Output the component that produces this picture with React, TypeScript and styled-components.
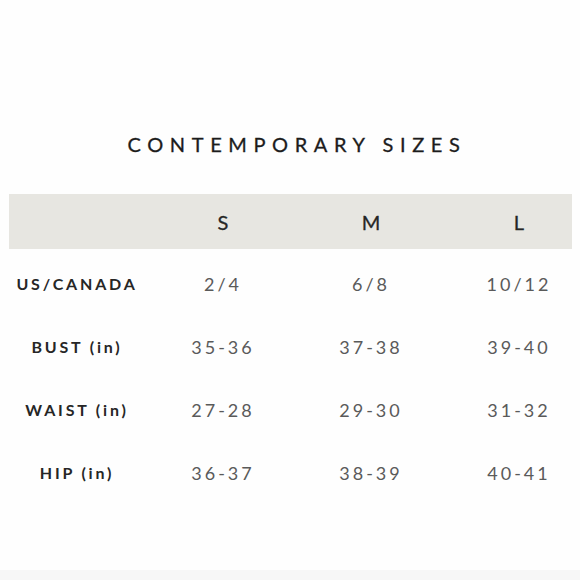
import React from 'react';
import styled, { createGlobalStyle } from 'styled-components';

const SIZES = ['S', 'M', 'L'];

const ROWS = [
  { label: 'US/CANADA', values: ['2/4', '6/8', '10/12'] },
  { label: 'BUST (in)', values: ['35-36', '37-38', '39-40'] },
  { label: 'WAIST (in)', values: ['27-28', '29-30', '31-32'] },
  { label: 'HIP (in)', values: ['36-37', '38-39', '40-41'] },
];

const GlobalStyle = createGlobalStyle`
  html, body {
    margin: 0;
    padding: 0;
    background: #fefefe;
    overflow: hidden;
  }
  body {
    font-family: Lato, "Open Sans", sans-serif;
  }
`;

export default function App() {
  return (
    <>
      <GlobalStyle />
      <Page>
        <Title>CONTEMPORARY SIZES</Title>
        <Table>
          <HeaderBand>
            <Cell />
            {SIZES.map((s) => (
              <SizeHead key={s}>{s}</SizeHead>
            ))}
          </HeaderBand>
          {ROWS.map((row) => (
            <Row key={row.label}>
              <Label>{row.label}</Label>
              {row.values.map((v, i) => (
                <Value key={i}>{v}</Value>
              ))}
            </Row>
          ))}
        </Table>
        <Footer />
      </Page>
    </>
  );
}

const Page = styled.div`
  display: flex;
  flex-direction: column;
  height: 580px;
  padding-top: 132px;
  box-sizing: border-box;
`;

const Title = styled.h1`
  margin: 0;
  padding-left: 14px;
  text-align: center;
  font-size: 20px;
  line-height: 24px;
  font-weight: 400;
  letter-spacing: 6.6px;
  color: #1c1c1c;
  -webkit-text-stroke: 0.3px #1c1c1c;
`;

const Table = styled.div`
  display: flex;
  flex-direction: column;
  margin: 38px 0 0 9px;
  width: 563px;
`;

const gridCols = `
  display: grid;
  grid-template-columns: 140px repeat(3, 148px);
  align-items: center;
  justify-items: center;
`;

const HeaderBand = styled.div`
  ${gridCols}
  height: 55px;
  background: #e7e6e1;
  margin-bottom: 3px;
`;

const Row = styled.div`
  ${gridCols}
  height: 63px;
`;

const Cell = styled.div``;

const SizeHead = styled.div`
  font-size: 20px;
  font-weight: 400;
  color: #262626;
  -webkit-text-stroke: 0.3px #262626;
`;

const Label = styled.div`
  margin-right: 4px;
  font-size: 16px;
  font-weight: 700;
  letter-spacing: 2.8px;
  color: #262626;
  white-space: nowrap;
`;

const Value = styled.div`
  font-size: 18px;
  letter-spacing: 3px;
  color: #5a5a5a;
  white-space: nowrap;
`;

const Footer = styled.div`
  margin-top: auto;
  height: 10px;
  background: #f7f7f7;
`;
